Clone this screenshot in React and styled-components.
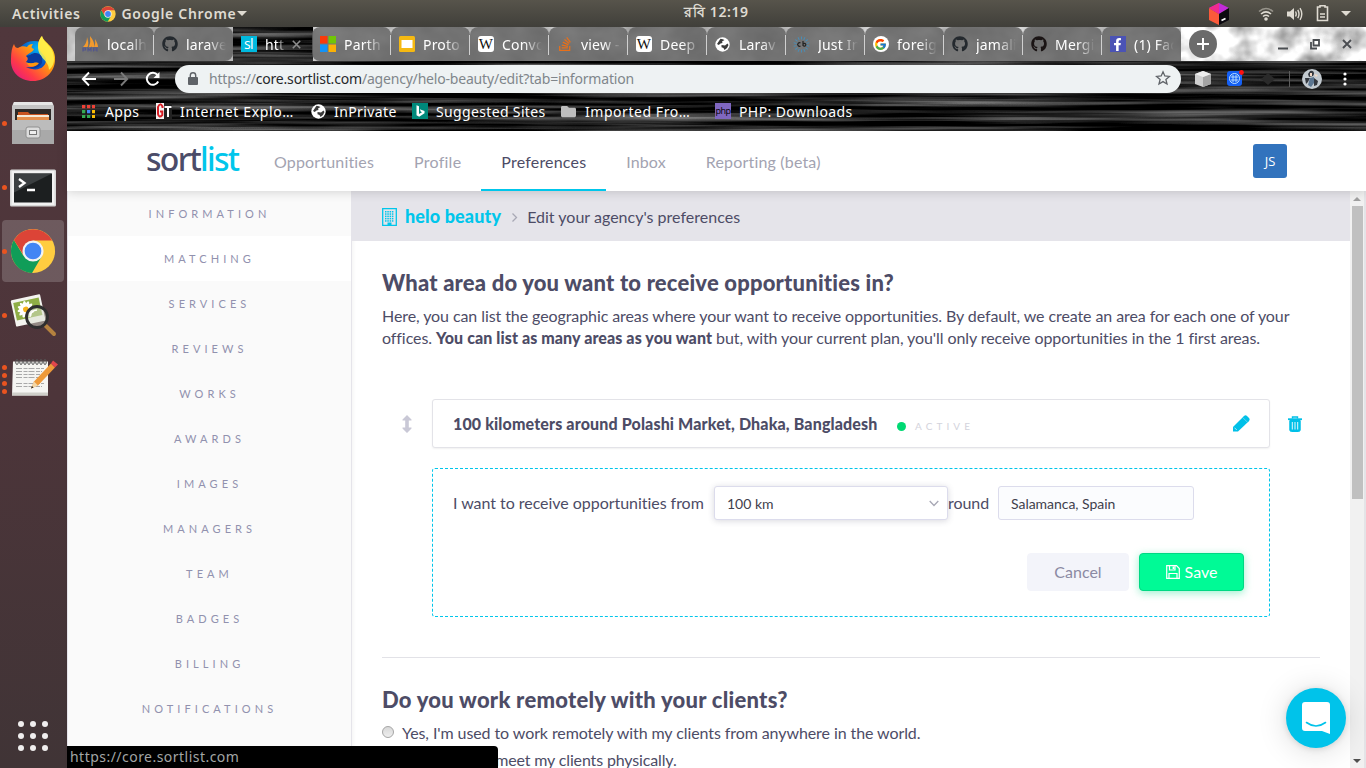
import React from "react";
import styled, { createGlobalStyle, css } from "styled-components";
import { FaGithub, FaStackOverflow, FaFacebookF, FaFolder } from "react-icons/fa";
import { FcGoogle } from "react-icons/fc";

const GlobalStyle = createGlobalStyle`
  * { box-sizing: border-box; }
  html, body { margin: 0; padding: 0; overflow: hidden; }
  body { font-family: Lato, "Liberation Sans", sans-serif; color: #4d4c66; font-variant-ligatures: none; }
  svg { display: block; flex: none; }
`;

const uiFont = css`font-family: "Noto Sans", "Open Sans", sans-serif;`;

const Desktop = styled.div`
  width: 1366px; height: 768px; overflow: hidden;
  display: flex; flex-direction: column;
`;

/* ---------- desktop top bar ---------- */
const TopBar = styled.div`
  ${uiFont}
  height: 27px; flex: none; padding: 0 15px 0 12px;
  display: grid; grid-template-columns: 1fr auto 1fr; align-items: center;
  background: linear-gradient(#57544b, #403f3a);
  color: #dfdbd2; font-size: 14px; font-weight: 600;
`;
const TopGroup = styled.div`
  display: flex; align-items: center; gap: ${p => p.$gap}px;
  justify-content: ${p => (p.$end ? "flex-end" : "flex-start")};
`;
const TopText = styled.span`
  white-space: nowrap; letter-spacing: ${p => p.$ls || 0}px;
`;
const Clock = styled.span`
  position: relative; top: -1px; left: 35px; white-space: nowrap; font-size: 14px; letter-spacing: 0.6px;
`;
const Caret = styled.i`
  border: 5px solid transparent; border-top-color: #dfdbd2; border-bottom: 0; margin-left: ${p => p.$pull || 0}px;
`;

/* ---------- dock ---------- */
const Below = styled.div`flex: 1; display: flex; min-height: 0;`;
const Dock = styled.div`
  width: 67px; flex: none; display: flex; flex-direction: column;
  background: linear-gradient(#50373c 0%, #4d353a 50%, #403436 100%);
`;
const DockItem = styled.div`
  height: 64px; display: flex; align-items: center; padding-left: 2px;
`;
const DockFace = styled.div`
  width: 62px; height: 62px; border-radius: 4px; display: flex; align-items: center;
  background: ${p => (p.$active ? "rgba(255,255,255,.18)" : "none")};
`;
const Pips = styled.div`
  width: 5px; display: flex; flex-direction: column; gap: 3px; margin-right: 3px;
`;
const Pip = styled.i`width: 5px; height: 5px; border-radius: 50%; background: #e95420;`;
const AppGrid = styled.div`
  margin: auto 0 17px 18px; display: grid; grid-template-columns: repeat(3, 6px); gap: 6px;
`;
const AppDot = styled.i`width: 6px; height: 6px; border-radius: 50%; background: #f0eeee;`;

/* ---------- browser window ---------- */
const Window = styled.div`flex: 1; display: flex; flex-direction: column; min-width: 0; position: relative;`;
const Chrome = styled.div`${uiFont} height: 104px; flex: none; position: relative; color: #fff; background: #000; isolation: isolate;`;
const TextureLayer = styled.div`position: absolute; inset: 0; z-index: -1; overflow: hidden;`;
const TabStrip = styled.div`
  height: 34px; display: flex; position: relative; padding-left: 8px; isolation: isolate;
`;
const StripBack = styled.div`
  position: absolute; z-index: -1; top: 0; bottom: 0;
  left: ${p => p.$left}px; width: ${p => p.$width}px; overflow: hidden; background: #bdbdbd;
`;
const Tab = styled.div`
  width: 79px; height: 34px; flex: none; display: flex; align-items: center; gap: 8px; padding-left: 7px;
  border-radius: 8px 8px ${p => (p.$before ? 8 : 0)}px ${p => (p.$after ? 8 : 0)}px;
  background: ${p => (p.$active ? "none" : "rgba(98,98,98,.82)")};
  position: relative;
  &::after {
    content: ""; display: ${p => (p.$line ? "block" : "none")};
    position: absolute; right: 0; top: 8px; width: 1px; height: 20px; background: #d0d0d0;
  }
`;
const Favicon = styled.div`
  width: 17px; height: 17px; flex: none; display: flex; align-items: center; justify-content: center;
`;
const TabTitle = styled.span`
  width: ${p => (p.$short ? 21 : 40)}px; overflow: hidden; white-space: nowrap; font-size: 14px; letter-spacing: 0.2px; color: #fff;
  -webkit-mask-image: linear-gradient(90deg, #000 55%, transparent 100%);
`;
const TabClose = styled.svg`margin-left: -2px;`;
const NewTab = styled.div`
  width: 28px; height: 28px; border-radius: 50%; background: #6b6b6b; margin: 3px 0 0 8px;
  display: flex; align-items: center; justify-content: center;
`;
const WindowButtons = styled.div`display: flex; align-items: center; gap: 22px; margin-left: auto; padding-right: 14px;`;

const Toolbar = styled.div`height: 35px; display: flex; align-items: center; padding: 0 16px 0 14px;`;
const NavButtons = styled.div`display: flex; gap: 16px; width: 94px;`;
const Omnibox = styled.div`
  width: 1006px; height: 28px; border-radius: 14px; background: #eef2f3; color: #80868b;
  display: flex; align-items: center; padding: 0 10px 2px 13px; margin-top: 1px;
`;
const Url = styled.span`
  font-size: 14px; letter-spacing: -0.19px; margin-left: 11px; flex: 1; white-space: nowrap;
  b { font-weight: 400; color: #26282b; }
`;
const Extensions = styled.div`display: flex; align-items: center; flex: 1; padding-left: 14px; gap: 16px;`;
const Divider = styled.i`width: 1px; height: 16px; background: #5c5c5c; margin: 0 -4px 0 -3px;`;
const Kebab = styled.svg`margin-left: 5px;`;
const Bookmarks = styled.div`height: 35px; display: flex; padding-left: 15px; align-items: center; font-size: 14px;`;
const Bookmark = styled.div`
  width: ${p => p.$w}px; display: flex; align-items: center; gap: ${p => p.$gap || 8}px; white-space: nowrap;
  letter-spacing: ${p => p.$ls || 0.4}px; margin-top: -5px;
`;

/* ---------- site ---------- */
const Site = styled.div`flex: 1; display: flex; flex-direction: column; min-height: 0; background: #fff;`;
const Header = styled.header`
  height: 60px; flex: none; display: flex; align-items: center; padding: 0 79px 0 79px; background: #fff;
  box-shadow: 0 1px 10px rgba(0,0,0,.16); position: relative; z-index: 2;
`;
const Logo = styled.div`
  ${uiFont}
  width: 108px; font-size: 32px; font-weight: 500; line-height: 60px; letter-spacing: -1.7px; color: #4b4c69; margin-top: -4px; white-space: nowrap;
  span { color: #00c6eb; }
`;
const Nav = styled.nav`display: flex; height: 60px;`;
const NavLink = styled.a`
  padding: 2px 20px 0; line-height: 58px; height: 60px; font-size: 16px; white-space: nowrap; letter-spacing: ${p => p.$ls}px;
  color: ${p => (p.$active ? "#4d4c66" : "#a3a3b1")};
  border-bottom: 2px solid ${p => (p.$active ? "#00c6eb" : "transparent")};
`;
const Avatar = styled.div`
  width: 34px; height: 34px; border-radius: 3px; margin-left: auto; background: #3273bd; color: #fff;
  display: flex; align-items: center; justify-content: center; font: 400 13px "Open Sans", sans-serif; padding-bottom: 1px;
`;
const Body = styled.div`flex: 1; display: flex; min-height: 0;`;
const Sidebar = styled.aside`
  width: 285px; flex: none; background: #fafafa; border: 1px solid #e5e4ea; border-width: 0 1px; overflow: hidden;
  box-shadow: 1px 0 4px rgba(0,0,0,.05);
`;
const SideItem = styled.a`
  display: block; height: 45px; line-height: 46px; text-align: center; font-size: 11px; letter-spacing: 4.08px;
  color: #9191ae; background: ${p => (p.$active ? "#fff" : "none")};
`;
const Main = styled.main`flex: 1; min-width: 0; overflow: hidden;`;
const Crumbs = styled.div`
  height: 50px; background: #e5e4ea; display: flex; align-items: center; margin-left: -1px; padding: 2px 0 0 31px;
`;
const Agency = styled.strong`font-size: 18px; font-weight: 900; color: #00c6eb; margin: -2px 10px 0 8px; letter-spacing: 0.12px;`;
const CrumbText = styled.span`font-size: 16px; margin-left: 9px; letter-spacing: 0.01px; margin-top: -1px;`;
const Content = styled.div`padding: 28px 30px 0;`;
const Title = styled.h2`
  margin: 0; font-size: 22px; font-weight: 900; line-height: 28px; letter-spacing: ${p => p.$ls || 0}px; white-space: nowrap;
`;
const Para = styled.p`
  margin: 8px 0 0; font-size: 16px; line-height: 22px; white-space: nowrap;
  b { font-weight: 900; letter-spacing: 0.09px; }
`;
const Line = styled.span`display: block; letter-spacing: ${p => p.$ls || 0}px;`;
const AreaRow = styled.div`display: flex; align-items: center; margin-top: 50px; padding-left: 20px;`;
const AreaCard = styled.div`
  width: 838px; height: 49px; margin: 0 18px 0 20px; border: 1px solid #e3e3e8; border-radius: 3px; background: #fff;
  box-shadow: 0 1px 2px rgba(0,0,0,.06); display: flex; align-items: center; padding: 0 19px 0 20px;
`;
const AreaName = styled.strong`font-size: 16px; font-weight: 900; letter-spacing: ${p => p.$ls}px; white-space: nowrap; width: 444px;`;
const StatusDot = styled.i`width: 9px; height: 9px; border-radius: 50%; background: #00d973; margin: 5px 9px 0 0;`;
const StatusText = styled.span`font-size: 10px; letter-spacing: 4.1px; color: #d3d3dc; margin: 5px auto 0 0;`;
const Editor = styled.section`
  width: 838px; height: 149px; margin: 20px 0 0 50px; border: 1px dashed #00c6eb; border-radius: 3px; padding: 17px 25px 25px 20px;
`;
const FormRow = styled.div`display: flex; align-items: center; height: 34px; font-size: 16px; white-space: nowrap;`;
const FormLabel = styled.span`
  width: ${p => p.$w}px; text-align: ${p => p.$align || "left"}; letter-spacing: -0.04px; margin-top: -2px;
  padding-right: ${p => (p.$align ? 1 : 0)}px;
`;
const Select = styled.div`
  width: 234px; height: 34px; border: 1px solid #dcdcec; border-radius: 3px; background: #fff; position: relative; z-index: 1;
  box-shadow: 0 1px 6px rgba(60,60,90,.2); display: flex; align-items: center; justify-content: space-between;
  padding: 1px 8px 0 12px; font-size: 14px; color: #3f3f4c;
`;
const Field = styled.div`
  width: 196px; height: 34px; border: 1px solid #dcdcec; border-radius: 3px; background: #fbfcfe; margin-left: 11px;
  padding: 1px 12px 0; line-height: 31px; font-size: 14px; color: #3f3f4c; letter-spacing: -0.03px;
`;
const Actions = styled.div`display: flex; justify-content: flex-end; gap: 10px; margin-top: 33px;`;
const Button = styled.div`
  height: 38px; width: ${p => (p.$primary ? 105 : 102)}px; border-radius: 4px; font-size: 16px; padding-bottom: 1px;
  display: flex; align-items: center; justify-content: center; gap: 5px;
  color: ${p => (p.$primary ? "#fff" : "#8b8aa3")};
  background: ${p => (p.$primary ? "#00fa96" : "#f3f4fa")};
  border: 1px solid ${p => (p.$primary ? "#00d883" : "#f3f4fa")};
  box-shadow: ${p => (p.$primary ? "0 2px 8px rgba(0,217,131,.4)" : "none")};
`;
const Rule = styled.hr`border: 0; height: 1px; background: #e2e2e7; margin: 40px 0 28px;`;
const Choices = styled.div`padding-top: 5px;`;
const Choice = styled.label`
  display: flex; align-items: center; gap: 8px; height: 27px; font-size: 16px; white-space: nowrap; letter-spacing: ${p => p.$ls}px;
`;
const Radio = styled.i`
  width: 12px; height: 12px; border-radius: 50%; border: 1px solid #a5a5a5; background: linear-gradient(#d8d8d8, #eee); margin-top: -2px;
`;
const ScrollTrack = styled.div`
  width: 16px; flex: none; background: #f1f1f1; border-right: 2px solid #e4e4e7; display: flex; flex-direction: column; align-items: center;
`;
const ScrollArrow = styled.i`
  border: 4px solid transparent; margin: ${p => (p.$down ? "auto 0 5px" : "6px 0 5px")};
  ${p => (p.$down ? "border-top-color: #4f4f4f; border-bottom: 0;" : "border-bottom-color: #a0a0a0; border-top: 0;")}
`;
const ScrollThumb = styled.div`width: 11px; height: 293px; background: #c0c0c0;`;
const ChatButton = styled.div`
  position: absolute; right: 20px; bottom: 20px; width: 60px; height: 60px; border-radius: 50%; background: #00c3ea; z-index: 5;
  box-shadow: 0 1px 6px rgba(0,0,0,.12), 0 2px 30px rgba(0,0,0,.15); display: flex; align-items: center; justify-content: center;
`;
const StatusBar = styled.div`
  ${uiFont}
  position: absolute; left: 0; bottom: 0; width: 431px; height: 22px; background: #000; color: #a3a6a5; border-radius: 0 4px 0 0; z-index: 4;
  padding-left: 3px; font-size: 14px; line-height: 21px; white-space: nowrap; letter-spacing: 0.47px;
`;

/* ---------- textures ---------- */
function Grain({ id, freq, seed, gain, bias, w, h }) {
  const row = `${gain} 0 0 0 ${bias}`;
  return (
    <svg width={w} height={h}>
      <filter id={id} x="0" y="0" width="100%" height="100%" colorInterpolationFilters="sRGB">
        <feTurbulence type="fractalNoise" baseFrequency={freq} numOctaves="3" seed={seed} />
        <feColorMatrix values={`${row} ${row} ${row} 0 0 0 0 1`} />
      </filter>
      <rect width={w} height={h} filter={`url(#${id})`} />
    </svg>
  );
}

/* ---------- drawings ---------- */
const ChromeLogo = ({ size }) => (
  <svg width={size} height={size} viewBox="0 0 48 48">
    <circle cx="24" cy="24" r="23" fill="#ffcd40" />
    <path d="M4.100 12.500A23 23 0 0 0 23 47L33.500 29 24 24 14 29Z" fill="#109d58" />
    <path d="M4.100 12.500 14.500 29 24 13H44A23 23 0 0 0 4.100 12.500Z" fill="#dc4437" />
    <circle cx="24" cy="24" r="11" fill="#f3f3f3" />
    <circle cx="24" cy="24" r="8.700" fill="#4285f4" />
  </svg>
);

const Firefox = () => (
  <svg width="46" height="48" viewBox="0 0 46 48">
    <defs>
      <linearGradient id="fxBody" x1="1" y1="0" x2="0.1" y2="1">
        <stop offset="0.1" stopColor="#ffe226" /><stop offset="0.45" stopColor="#ff980e" />
        <stop offset="0.75" stopColor="#ff3b47" /><stop offset="1" stopColor="#e31587" />
      </linearGradient>
      <radialGradient id="fxGlobe" cx="0.6" cy="0.2"><stop offset="0" stopColor="#00b3f4" /><stop offset="1" stopColor="#0a4fc0" /></radialGradient>
    </defs>
    <circle cx="24" cy="24" r="18" fill="url(#fxGlobe)" />
    <path d="M4 9C5 12 6 13 8 13c3-2 6-2 9-1 1-2 3-3 6-3-2 3-2 4 1 5-1 3-5 4-8 7 2 1 3 4 0 6 5 3 11-1 14 1-2 4-7 7-13 4 10 6 20 0 19-8-1-4-8-8-8-14 0-4 3-8 4-9 2 7 12 9 13 21C46 36 36 46 23 46 9 46 0 36 1 24 1 17 2 12 4 9Z" fill="url(#fxBody)" />
    <path d="M32 1c2 8 12 10 12 23 0 7-4 10-5 11 0-10-11-12-11-23 0-5 2-9 4-11Z" fill="#fff44f" opacity=".85" />
    <path d="M20 20c7-5 14 0 12 8-3 6-11 7-16 4 8 1 12-2 12-4-5-1-8 2-12-1 3-2 2-5 0-6Z" fill="#0a3b9e" />
    <path d="M16 27c5 3 9-1 13 1-2 3-6 4-10 3Z" fill="#ff980e" />
  </svg>
);

const Files = () => (
  <svg width="46" height="46" viewBox="0 0 46 46">
    <path d="M4 2H42L44 6V43H2V6Z" fill="#c4c4c4" /><path d="M4 2H42L43 5H3Z" fill="#e6e6e6" />
    <rect x="5" y="9" width="36" height="14" fill="#2e2a28" />
    <path d="M8 12h10l2 2h18v8H8Z" fill="#c9541f" /><path d="M7 15h32v2H7Z" fill="#f5ead8" /><rect x="7" y="17" width="32" height="4" fill="#e58f4c" />
    <path d="M2 20H44V44H2Z" fill="#a9a9a9" /><path d="M2 20H44V30H2Z" fill="#bcbcbc" />
    <rect x="16" y="27" width="14" height="11" rx="2" fill="#dcdcdc" stroke="#8f8f8f" />
    <rect x="19.500" y="30.500" width="7" height="4" fill="#eee" stroke="#777" />
  </svg>
);

const Terminal = () => (
  <svg width="46" height="40" viewBox="0 -1.500 46 40">
    <rect width="46" height="37" y="1" rx="1.500" fill="#d7d7d7" /><rect x="1.500" y="2.500" width="43" height="34" fill="#f2f2f2" />
    <rect x="4" y="5" width="38" height="29" fill="#1c1f20" /><path d="M4 5H42L4 24Z" fill="#3b3f41" />
    <path d="M9 10.500 14.500 14.500 9 18.500M17 21.500h8" fill="none" stroke="#fff" strokeWidth="2.300" />
  </svg>
);

const Shotwell = () => (
  <svg width="48" height="46" viewBox="0 0 48 46">
    <g transform="rotate(-12 18 18)">
      <rect x="3" y="5" width="30" height="27" rx="1" fill="#f4f4f0" /><rect x="5" y="8" width="26" height="18" fill="#8fae46" />
      {[0, 30, 60, 90, 120, 150].map(a => <ellipse key={a} cx="16" cy="17" rx="8.500" ry="2.400" fill="#fff" transform={`rotate(${a} 16 17)`} />)}
      <circle cx="16" cy="17" r="2.800" fill="#f5b21c" />
    </g>
    <path d="M36 34 44 42" stroke="#b5823f" strokeWidth="4" strokeLinecap="round" />
    <circle cx="27" cy="25" r="10.500" fill="rgba(215,222,205,.5)" stroke="#2f2f2f" strokeWidth="2.800" />
    <path d="M20 25a7 7 0 0 1 7-7" fill="none" stroke="#fff" strokeWidth="1.500" />
  </svg>
);

const Gedit = () => (
  <svg width="48" height="40" viewBox="0 1.500 48 40">
    <path d="M3 4H38V38H2Z" fill="#f5f5f2" /><path d="M2 35H38V38H2Z" fill="#cfcfc9" />
    {Array.from({ length: 8 }, (_, i) => <ellipse key={i} cx={7 + i * 4} cy="4.500" rx="1.300" ry="2.500" fill="none" stroke="#555" />)}
    {[11, 14, 17, 20, 26, 29].map((y, i) => <path key={y} d={`M6 ${y}H${i % 2 ? 32 : 34}`} stroke="#a9a9a9" strokeDasharray="6 1.500 4 1" />)}
    <path d="M21 31 24 24 41 6 45 10 28 28Z" fill="#ee9a3a" /><path d="M21 31 24 24 28 28Z" fill="#f3d7a6" />
    <path d="M41 6 43 3 48 7 45 10Z" fill="#e2464c" /><path d="M21 31 22 28.500 23.500 30Z" fill="#222" />
  </svg>
);

const Cube = () => (
  <svg width="20" height="22" viewBox="0 0 20 22">
    <path d="M10 0 20 5 10 11 0 5Z" fill="#c22bd9" /><path d="M0 5 10 11V22L0 17Z" fill="#fb5a3a" /><path d="M0 5 10 0 10 11Z" fill="#f02a8e" />
    <path d="M20 5V17L10 22V11Z" fill="#0c0a10" /><path d="M12.500 17.500 16.500 15.500" stroke="#fff" strokeWidth="1.600" />
  </svg>
);
const TrayGap = styled.i`width: 3px;`;
const Wifi = () => (
  <svg width="16" height="14" viewBox="0 0 16 14" fill="none" stroke="#dfdbd2" strokeWidth="1.600">
    <path d="M1 4.500Q8-1.500 15 4.500" opacity=".5" /><path d="M3 7Q8 2.600 13 7" /><path d="M5 9.500Q8 7 11 9.500" /><circle cx="8" cy="12" r="1" fill="#dfdbd2" />
  </svg>
);
const Volume = () => (
  <svg width="16" height="14" viewBox="0 0 16 14" fill="none" stroke="#dfdbd2" strokeWidth="1.400">
    <path d="M0 4.500H3L7 1V13L3 9.500H0Z" fill="#dfdbd2" stroke="none" /><path d="M8.500 4.500Q10 7 8.500 9.500M10.800 2.800Q13.200 7 10.800 11.200M13 1.200Q16.600 7 13 12.800" />
  </svg>
);
const Battery = () => (
  <svg width="13" height="17" viewBox="0 0 13 17">
    <path d="M4 2V.8H9V2H11.500V15.500H1.500V2Z" fill="none" stroke="#dfdbd2" strokeWidth="1.600" /><path d="M4 9h5M4 12h5" stroke="#dfdbd2" strokeWidth="1.700" />
  </svg>
);

/* ---------- favicons ---------- */
const Square = styled.span`
  width: 16px; height: 16px; border-radius: ${p => p.$r || 0}px; background: ${p => p.$bg}; color: ${p => p.$c || "#fff"};
  font: ${p => p.$font || `14px "Open Sans", sans-serif`}; line-height: 16px; letter-spacing: -0.5px;
  display: flex; align-items: center; justify-content: center; overflow: hidden;
`;
const PmaIcon = () => (
  <svg width="17" height="16" viewBox="0 0 17 16">
    <path d="M1 11Q5 7 5 1 7 6 6 11ZM7 11Q9 6 8 0 13 6 12 11ZM12 11Q14 7 13 3 16 8 16 11Z" fill="#f29a2e" />
    <path d="M1 15.500V12h2.500v2H1M6 15.500V12l1.500 2L9 12v3.500M11.500 15.500V12H15v3.500M11.500 14H15" fill="none" stroke="#53568c" strokeWidth="1.200" />
  </svg>
);
const MsIcon = () => (
  <svg width="16" height="16"><path d="M0 0h7.500v7.500H0z" fill="#f93b0b" /><path d="M8.500 0H16v7.500H8.500z" fill="#71c606" /><path d="M0 8.500h7.500V16H0z" fill="#1393f7" /><path d="M8.500 8.500H16V16H8.500z" fill="#fbb105" /></svg>
);
const SlidesIcon = () => (
  <svg width="16" height="16"><rect width="16" height="16" rx="1.500" fill="#f5b912" /><rect x="2.500" y="4" width="11" height="8" fill="#fff" /></svg>
);
const CbIcon = () => (
  <svg width="17" height="17" viewBox="-8.500 -8.500 17 17">
    {Array.from({ length: 14 }, (_, i) => <path key={i} d="M0-5V-8" stroke="#4a8db5" strokeWidth="1" transform={`rotate(${i * 25.7})`} />)}
    <path d="M-1-1.500a1.800 1.800 0 1 0 0 3M1.500-3.500v5M1.500.200a1.400 1.400 0 1 1 0 .1" fill="none" stroke="#222" strokeWidth="1.200" />
  </svg>
);
const GoogleDisc = styled.span`width: 16px; height: 16px; border-radius: 50%; background: #fff; display: flex; align-items: center; justify-content: center;`;
const GlobeIcon = () => (
  <svg width="15" height="15" viewBox="0 0 15 15">
    <circle cx="7.500" cy="7.500" r="7.200" fill="#fff" />
    <path d="M5.500 1.800Q8 2 9.500 3L7 4.500 7.500 6 5.500 6.500 3.800 8 2 7ZM6.500 8 10 8.500 12.500 6.500 13.500 8Q12.500 11.500 9.500 13L8.500 11 6.500 10.300Z" fill="#3a3a3a" />
  </svg>
);
const AppsIcon = () => (
  <svg width="13" height="13">
    {["#ef4136", "#ef4136", "#ef4136", "#35a853", "#4285f4", "#fbbc05", "#35a853", "#35a853", "#fbbc05"].map((c, i) =>
      <rect key={i} x={(i % 3) * 5} y={Math.floor(i / 3) * 5} width="3.300" height="3.300" fill={c} />)}
  </svg>
);
const GtIcon = () => (
  <svg width="16" height="16"><rect width="8" height="16" fill="#f2f2f2" /><rect x="8" width="8" height="16" fill="#222" />
    <path d="M6.500 5V3.500Q4-1 2 4V11Q3 15.500 6.300 12V8.500H4" fill="none" stroke="#d81f26" strokeWidth="2" /><path d="M8.500 4H15.500M12 4V14" stroke="#fff" strokeWidth="2" /></svg>
);
const BingIcon = () => (
  <svg width="16" height="16"><rect width="16" height="16" fill="#00897b" /><path d="M4.500 2.300 7 3.200V11L10 9.300 8.700 8.500 7.800 6.300 12.500 7.900V10.300L7.200 13.800 4.500 12.200Z" fill="#fff" /></svg>
);

const StarIcon = () => (
  <svg width="16" height="16" viewBox="0 0 16 16" fill="none" stroke="#5f6368" strokeWidth="1.300"><path d="M8 1.800 9.800 6 14.500 6.400 10.900 9.400 12 14 8 11.600 4 14 5.100 9.400 1.500 6.400 6.200 6Z" /></svg>
);
const Building = () => (
  <svg width="15" height="18" viewBox="0 0 15 18">
    <path d="M.7.700H14.300V17.300H.7Z" fill="none" stroke="#00c6eb" strokeWidth="1.300" />
    {[3, 5.300, 7.600, 9.900, 12.200].map(y => [3, 5.300, 7.600, 9.900].map(x => <rect key={`${x}-${y}`} x={x} y={y} width="1.500" height="1.500" fill="#00c6eb" />))}
    <rect x="5.500" y="14.500" width="4" height="3" fill="#00c6eb" />
  </svg>
);
const Pencil = () => (
  <svg width="17" height="17" viewBox="0 0 17 17" fill="#00c0e8">
    <path d="M0 16.500V12L10.800 1.200Q12.500-.4 14 1L16 3Q17.400 4.500 15.800 6.200L5 16.500Z" />
    <path d="M9.800 2.600 14.400 7.200" stroke="#7fe0f4" strokeWidth=".7" />
    <path d="M1.600 12.800 3.800 15" stroke="#fff" strokeWidth="1" strokeDasharray="1.200 1" />
  </svg>
);
const Trash = () => (
  <svg width="14" height="16" viewBox="0 0 14 16" fill="none" stroke="#00c0e8">
    <path d="M4.500 2.500V1H9.500V2.500" strokeWidth="1.400" /><path d="M0 3.200H14" strokeWidth="1.800" /><path d="M1.800 4.500H12.200V14Q12 15.500 10.500 15.500H3.500Q2 15.500 1.800 14Z" fill="#00c0e8" strokeWidth="1" />
    <path d="M4.300 6V13.500M7 6V13.500M9.700 6V13.500" stroke="#fff" strokeWidth=".9" />
  </svg>
);
const Mover = () => (
  <svg width="10" height="18" viewBox="0 0 10 18" fill="#c9c8d6"><path d="M5 0 9.500 4.500V5.500H6.800V12.500H9.500V13.500L5 18 .5 13.500V12.500H3.200V5.500H.5V4.500Z" /></svg>
);
const Floppy = () => (
  <svg width="14" height="14" viewBox="0 0 14 14" fill="none" stroke="#fff" strokeWidth="1.200">
    <path d="M.7.700H10.500L13.300 3.500V13.300H.7Z" /><path d="M3 13V8.500H11V13M3.500 1V5H9V1" /><path d="M7.500 1.500V4" strokeWidth="1.800" />
  </svg>
);
const Chevron = ({ down }) => (
  <svg width={down ? 10 : 7} height={down ? 7 : 9} viewBox={down ? "0 0 10 7" : "0 0 7 9"} fill="none" stroke="#a8a8b5" strokeWidth="1.300">
    <path d={down ? "M.7 1 5 5.500 9.300 1" : "M1.500.500 5.500 4.500 1.500 8.500"} />
  </svg>
);

const TABS = [
  ["localh", <PmaIcon />], ["larave", <FaGithub size={16} color="#24292e" />], ["htt", <Square $bg="#00b9de">sl</Square>],
  ["Parth", <MsIcon />], ["Proto", <SlidesIcon />], ["Convo", <Square $bg="#fff" $r={3} $c="#111" $font={`15px "Liberation Serif", serif`}>W</Square>],
  ["view -", <FaStackOverflow size={16} color="#e8701a" />], ["Deep", <Square $bg="#fff" $r={3} $c="#111" $font={`15px "Liberation Serif", serif`}>W</Square>],
  ["Larav", <GlobeIcon />], ["Just In", <CbIcon />],
  ["foreig", <GoogleDisc><FcGoogle size={13} /></GoogleDisc>], ["jamali", <FaGithub size={16} color="#24292e" />],
  ["Mergi", <FaGithub size={16} color="#1a1414" />], ["(1) Fac", <Square $bg="#4b53b5"><FaFacebookF size={13} /></Square>],
];

const MENU = ["INFORMATION", "MATCHING", "SERVICES", "REVIEWS", "WORKS", "AWARDS", "IMAGES", "MANAGERS", "TEAM", "BADGES", "BILLING", "NOTIFICATIONS"];
const NAV = [["Opportunities", 0.17], ["Profile", 0.25], ["Preferences", 0.19], ["Inbox", 0.1], ["Reporting (beta)", 0.18]];
const DOCK = [[<Firefox />, 0], [<Files />, 1], [<Terminal />, 1], [<ChromeLogo size={46} />, 1, true], [<Shotwell />, 1], [<Gedit />, 4]];

function BrowserChrome() {
  return (
    <Chrome>
      <TextureLayer><Grain id="wood" freq="0.004 0.19" seed="11" gain="0.95" bias="-0.36" w={1299} h={104} /></TextureLayer>
      <TabStrip>
        <StripBack $left={0} $width={166}><Grain id="barkA" freq="0.04" seed="3" gain="0.4" bias="0.52" w={166} h={34} /></StripBack>
        <StripBack $left={246} $width={868}><Grain id="barkB" freq="0.03 0.04" seed="5" gain="0.5" bias="0.5" w={868} h={34} /></StripBack>
        <StripBack $left={1114} $width={185}><Grain id="barkC" freq="0.04 0.04" seed="8" gain="1" bias="0.42" w={185} h={34} /></StripBack>
        {TABS.map(([title, icon], i) => (
          <Tab key={i} $active={i === 2} $before={i === 1} $after={i === 3} $line={i !== 1 && i !== 2 && i !== 13}>
            <Favicon>{icon}</Favicon>
            <TabTitle $short={i === 2}>{title}</TabTitle>
            {i === 2 && <TabClose width="9" height="9"><path d="M.8.800 8.200 8.200M8.200.800.800 8.200" stroke="#8c8c8c" strokeWidth="1.600" /></TabClose>}
          </Tab>
        ))}
        <NewTab><svg width="12" height="12"><path d="M6 0V12M0 6H12" stroke="#fff" strokeWidth="2" /></svg></NewTab>
        <WindowButtons>
          <svg width="10" height="12"><path d="M0 10.500H10" stroke="#4a4d51" strokeWidth="2" /></svg>
          <svg width="10" height="12" fill="none" stroke="#4a4d51" strokeWidth="1.800"><path d="M3.500 2H9V7.500H3.500ZM1 4V10.500H7" /></svg>
          <svg width="10" height="10"><path d="M1 1 9 9M9 1 1 9" stroke="#4a4d51" strokeWidth="1.900" /></svg>
        </WindowButtons>
      </TabStrip>
      <Toolbar>
        <NavButtons>
          <svg width="16" height="16" fill="none" stroke="#fff" strokeWidth="1.900"><path d="M15 8H2M8 1.500 1.800 8 8 14.500" /></svg>
          <svg width="16" height="16" fill="none" stroke="#7a7a7a" strokeWidth="1.900"><path d="M1 8H14M8 1.500 14.200 8 8 14.500" /></svg>
          <svg width="16" height="16" fill="none" stroke="#fff" strokeWidth="2"><path d="M13.200 10.500A6 6 0 1 1 12.500 4" /><path d="M14.500 1V7H8.500Z" fill="#fff" stroke="none" /></svg>
        </NavButtons>
        <Omnibox>
          <svg width="10" height="13"><rect y="5" width="10" height="8" rx="1" fill="#5f6368" /><path d="M2.300 6V3.500a2.700 2.700 0 0 1 5.400 0V6" fill="none" stroke="#5f6368" strokeWidth="1.400" /></svg>
          <Url>https://<b>core.sortlist.com</b>/agency/helo-beauty/edit?tab=information</Url>
          <StarIcon />
        </Omnibox>
        <Extensions>
          <svg width="16" height="16"><path d="M8 0 16 3V13L8 16 0 13V3Z" fill="#cfcfcf" /><path d="M8 6 16 3V13L8 16Z" fill="#a4a4a4" /><path d="M8 0 16 3 8 6 0 3Z" fill="#eee" /></svg>
          <svg width="17" height="17"><rect y="1" width="15" height="15" rx="3" fill="#1560f5" /><circle cx="7.500" cy="8.500" r="5" fill="none" stroke="#bfe3ff" /><path d="M4 7h7M4 10h7M6 5v7M9 5v7" stroke="#bfe3ff" strokeWidth=".9" /><circle cx="14.500" cy="2.500" r="2.400" fill="#f11" /></svg>
          <svg width="16" height="14"><path d="M8 1 15 7 8 13 1 7Z" fill="#2a2a2a" /></svg>
          <Divider />
          <svg width="20" height="20"><circle cx="10" cy="10" r="10" fill="#c3cad0" /><path d="M8 2Q12 1 12 5L11 7 7 8 6 5ZM3 9 8 9 6 13 4 15ZM12 9 16 12 15 16 12 17Z" fill="#34383f" /><path d="M8 9 12 8 12 14 9 18 6 16Z" fill="#5b7590" /><path d="M8 4 10 4 10 7 8 7ZM12 5 16 6 14 8Z" fill="#f3d9c6" /></svg>
          <Kebab width="4" height="14" fill="#fff"><circle cx="2" cy="2" r="1.600" /><circle cx="2" cy="7" r="1.600" /><circle cx="2" cy="12" r="1.600" /></Kebab>
        </Extensions>
      </Toolbar>
      <Bookmarks>
        <Bookmark $w={74} $gap={10}><AppsIcon /><span>Apps</span></Bookmark>
        <Bookmark $w={155} $ls={0.65}><GtIcon /><span>Internet Explo…</span></Bookmark>
        <Bookmark $w={101}><GlobeIcon /><span>InPrivate</span></Bookmark>
        <Bookmark $w={149} $ls={0.35}><BingIcon /><span>Suggested Sites</span></Bookmark>
        <Bookmark $w={154} $gap={9} $ls={0.55}><FaFolder size={15} color="#bdbdbd" /><span>Imported Fro…</span></Bookmark>
        <Bookmark $w={160}><Square $bg="#8067c0" $c="#000" $font={`9px "Open Sans", sans-serif`}>php</Square><span>PHP: Downloads</span></Bookmark>
      </Bookmarks>
    </Chrome>
  );
}

export default function App() {
  return (
    <Desktop>
      <GlobalStyle />
      <TopBar>
        <TopGroup $gap={20}>
          <TopText $ls={0.6}>Activities</TopText>
          <TopGroup $gap={5}><ChromeLogo size={16} /><TopText $ls={0.7}>Google Chrome</TopText><Caret $pull={-4} /></TopGroup>
        </TopGroup>
        <Clock>রবি 12:19</Clock>
        <TopGroup $gap={13} $end>
          <Cube /><TrayGap /><Wifi /><Volume /><Battery /><Caret $pull={-1} />
        </TopGroup>
      </TopBar>
      <Below>
        <Dock>
          {DOCK.map(([icon, pips, active], i) => (
            <DockItem key={i}>
              <DockFace $active={active}>
                <Pips>{Array.from({ length: pips }, (_, k) => <Pip key={k} />)}</Pips>
                {icon}
              </DockFace>
            </DockItem>
          ))}
          <AppGrid>{Array.from({ length: 9 }, (_, i) => <AppDot key={i} />)}</AppGrid>
        </Dock>
        <Window>
          <BrowserChrome />
          <Site>
            <Header>
              <Logo>sort<span>list</span></Logo>
              <Nav>{NAV.map(([n, ls]) => <NavLink key={n} $ls={ls} $active={n === "Preferences"}>{n}</NavLink>)}</Nav>
              <Avatar>JS</Avatar>
            </Header>
            <Body>
              <Sidebar>{MENU.map(m => <SideItem key={m} $active={m === "MATCHING"}>{m}</SideItem>)}</Sidebar>
              <Main>
                <Crumbs>
                  <Building /><Agency>helo beauty</Agency><Chevron /><CrumbText>Edit your agency's preferences</CrumbText>
                </Crumbs>
                <Content>
                  <Title $ls={0.19}>What area do you want to receive opportunities in?</Title>
                  <Para>
                    <Line $ls={-0.085}>Here, you can list the geographic areas where your want to receive opportunities. By default, we create an area for each one of your</Line>
                    <Line $ls={-0.08}>offices. <b>You can list as many areas as you want</b> but, with your current plan, you'll only receive opportunities in the 1 first areas.</Line>
                  </Para>
                  <AreaRow>
                    <Mover />
                    <AreaCard>
                      <AreaName $ls={0.14}>100 kilometers around Polashi Market, Dhaka, Bangladesh</AreaName>
                      <StatusDot /><StatusText>ACTIVE</StatusText>
                      <Pencil />
                    </AreaCard>
                    <Trash />
                  </AreaRow>
                  <Editor>
                    <FormRow>
                      <FormLabel $w={261}>I want to receive opportunities from</FormLabel>
                      <Select>100 km<Chevron down /></Select>
                      <FormLabel $w={39} $align="right">round</FormLabel>
                      <Field>Salamanca, Spain</Field>
                    </FormRow>
                    <Actions>
                      <Button>Cancel</Button>
                      <Button $primary><Floppy />Save</Button>
                    </Actions>
                  </Editor>
                  <Rule />
                  <Title $ls={0.25}>Do you work remotely with your clients?</Title>
                  <Choices>
                    <Choice $ls={-0.085}><Radio />Yes, I'm used to work remotely with my clients from anywhere in the world.</Choice>
                    <Choice $ls={-0.14}><Radio />No, I need to meet my clients physically.</Choice>
                  </Choices>
                </Content>
              </Main>
              <ScrollTrack><ScrollArrow /><ScrollThumb /><ScrollArrow $down /></ScrollTrack>
            </Body>
          </Site>
          <StatusBar>https://core.sortlist.com</StatusBar>
          <ChatButton>
            <svg width="28" height="32" viewBox="0 0 28 32">
              <path d="M3 0H25A3 3 0 0 1 28 3V32L20 29H3A3 3 0 0 1 0 26V3A3 3 0 0 1 3 0Z" fill="#fff" />
              <path d="M4.500 20.500Q14 27.500 23.500 20.500" fill="none" stroke="#00c3ea" strokeWidth="1.600" strokeLinecap="round" />
            </svg>
          </ChatButton>
        </Window>
      </Below>
    </Desktop>
  );
}
